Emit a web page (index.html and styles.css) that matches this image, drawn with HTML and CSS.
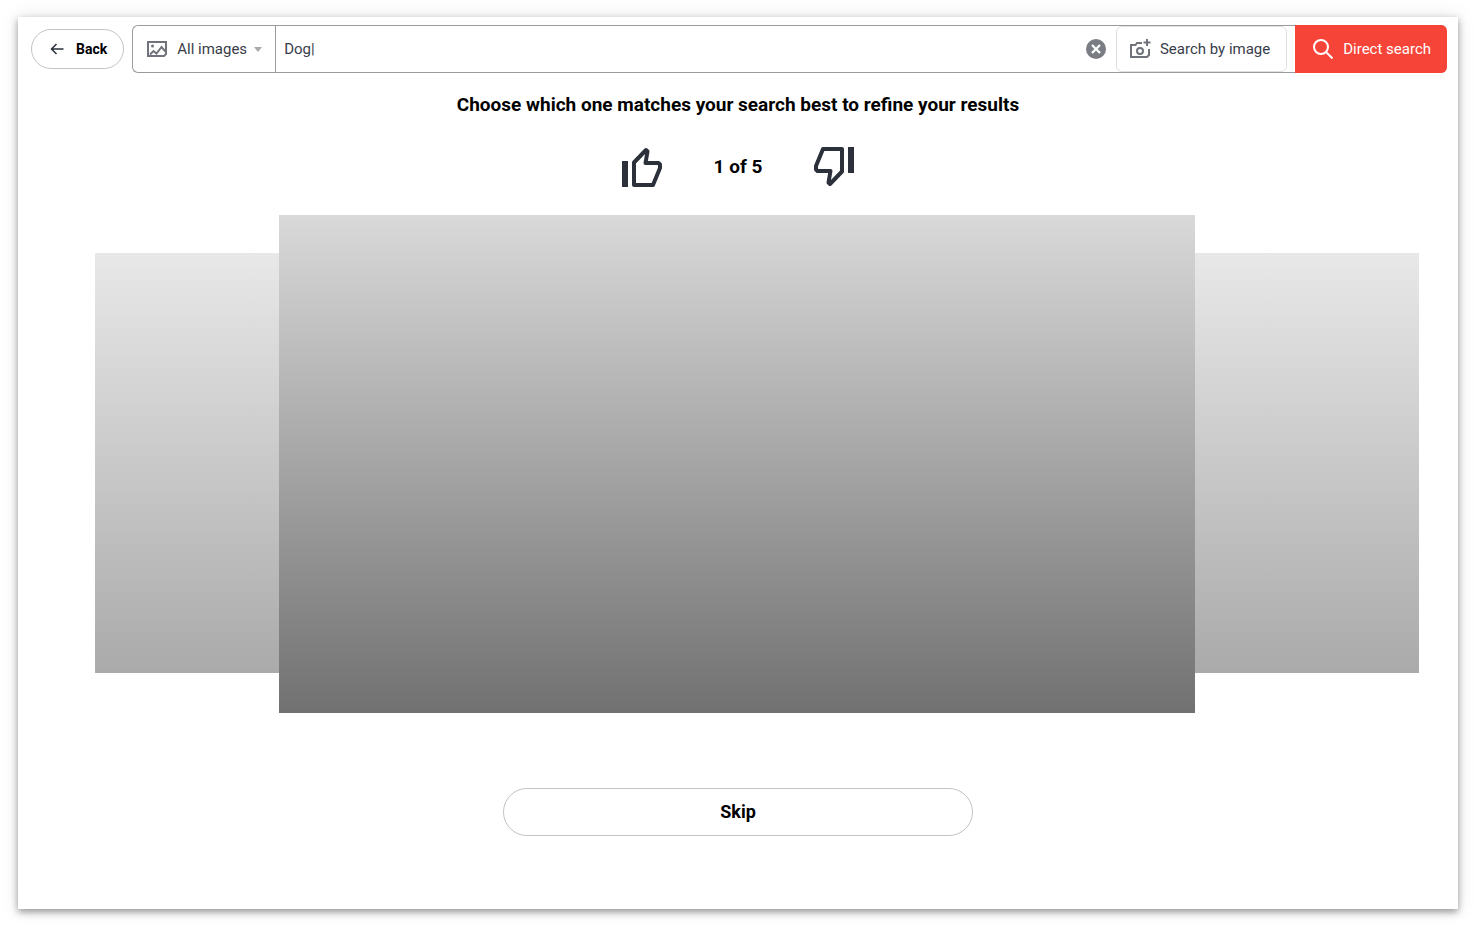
FILE: index.html
```html
<!DOCTYPE html>
<html lang="en">
<head>
<meta charset="utf-8">
<title>Refine your search</title>
<link rel="stylesheet" href="styles.css">
</head>
<body>
<div class="page">
  <header class="topbar">
    <button class="back" type="button">
      <svg class="back-icon" viewBox="0 0 14 12" aria-hidden="true"><path d="M13.500 6H1.500M6.500 1L1.500 6l5 5"/></svg>
      Back
    </button>
    <form class="search">
      <label class="category">
        <svg class="category-icon" viewBox="0 0 20 16" aria-hidden="true"><path d="M1 1h18v12L17 15H1z"/><path d="M3 13.500L6.500 10l3 2.500L14.500 6 19 11"/><circle cx="5.500" cy="5" r="1.500"/></svg>
        <select class="category-select" aria-label="Category"><option>All images</option></select>
        <svg class="caret" viewBox="0 0 8 5" aria-hidden="true"><path d="M0 0h8L4 5z"/></svg>
      </label>
      <input class="query" type="text" aria-label="Search" value="Dog|">
      <button class="clear" type="button" aria-label="Clear"><svg class="clear-icon" viewBox="0 0 20 20" aria-hidden="true"><circle cx="10" cy="10" r="10"/><path d="M6 6l8 8M14 6l-8 8"/></svg></button>
      <button class="by-image" type="button">
        <svg class="camera-icon" viewBox="0 0 21 20" aria-hidden="true"><path d="M12 4H7L5.500 6H1v12h16l2-2v-6"/><circle cx="10" cy="12" r="3"/><path d="M17 0v7M13.500 3.500h7"/></svg>
        Search by image
      </button>
      <button class="direct" type="submit">
        <svg class="magnifier" viewBox="0 0 20 20" aria-hidden="true"><circle cx="8" cy="8" r="7"/><path d="M13 13l6.500 6.500"/></svg>
        Direct search
      </button>
    </form>
  </header>
  <main class="refine">
    <h1 class="title">Choose which one matches your search best to refine your results</h1>
    <div class="vote">
      <button class="thumb" type="button" aria-label="Matches"><svg class="thumb-icon" viewBox="0 0 40 40" aria-hidden="true"><path class="bar" d="M0 14h6v26H0z"/><path class="hand" d="M12 15.500L24 3 25.500 4.500 23.500 16H36.500L38 17.500V21L31 38H12z"/></svg></button>
      <span class="count">1 of 5</span>
      <button class="thumb" type="button" aria-label="Does not match"><svg class="thumb-icon thumb-down" viewBox="0 0 40 40" aria-hidden="true"><path class="bar" d="M0 14h6v26H0z"/><path class="hand" d="M12 15.500L24 3 25.500 4.500 23.500 16H36.500L38 17.500V21L31 38H12z"/></svg></button>
    </div>
    <div class="carousel">
      <div class="slide"></div>
      <div class="slide slide-current"></div>
      <div class="slide"></div>
    </div>
    <button class="skip" type="button">Skip</button>
  </main>
</div>
</body>
</html>
```
FILE: styles.css
```css
* { box-sizing: border-box; }
body {
  margin: 0;
  padding: 17px 18px 19px;
  min-height: 100vh;
  display: flex;
  background: #fff;
  color: #000;
  font-family: Roboto, "Liberation Sans", sans-serif;
}
button, input, select { font: inherit; color: inherit; margin: 0; }
button { cursor: pointer; }
svg { display: block; flex: none; fill: none; }
.page {
  flex: 1;
  display: flex;
  flex-direction: column;
  background: #fff;
  box-shadow: 0 3px 7px rgba(0, 0, 0, .38), 0 0 18px rgba(0, 0, 0, .1);
}
.topbar {
  display: flex;
  align-items: center;
  gap: 8px;
  padding: 8px 11px 0 13px;
}
.back {
  display: flex;
  align-items: center;
  gap: 12px;
  height: 40px;
  padding: 0 16px 0 18px;
  border: 1px solid #c4c4c4;
  border-radius: 20px;
  background: #fff;
  font-size: 14px;
  font-weight: 700;
}
.back-icon { width: 14px; height: 12px; stroke: #2b303b; stroke-width: 1.5; }
.search {
  flex: 1;
  display: flex;
  align-items: center;
  height: 48px;
  border: 1px solid #999b9f;
  border-right: 0;
  border-radius: 6px;
  color: #383d49;
  font-size: 15px;
}
.category {
  display: flex;
  align-items: center;
  align-self: stretch;
  width: 143px;
  padding: 0 13px 0 14px;
  border-right: 1px solid #999b9f;
}
.category-icon { width: 20px; height: 16px; stroke: #6f737b; stroke-width: 2; }
.category-icon circle { fill: #6f737b; stroke: none; }
.category-select {
  flex: 1;
  min-width: 0;
  padding: 0 0 0 10px;
  border: 0;
  background: none;
  appearance: none;
}
.caret { width: 8px; height: 5px; fill: #a7a9ad; }
.query {
  flex: 1;
  min-width: 0;
  padding: 0 8px;
  border: 0;
  outline: 0;
  background: none;
}
.clear { margin-right: 10px; padding: 0; border: 0; background: none; }
.clear-icon { width: 20px; height: 20px; fill: #7a7d83; }
.clear-icon path { stroke: #fff; stroke-width: 2.4; }
.by-image {
  display: flex;
  align-items: center;
  gap: 9px;
  height: 46px;
  padding: 0 16px 0 13px;
  margin-right: 8px;
  border: 1px solid #dedfe1;
  border-radius: 6px;
  background: #fff;
}
.camera-icon { width: 21px; height: 20px; stroke: #6f737b; stroke-width: 2; }
.direct {
  display: flex;
  align-items: center;
  gap: 10px;
  height: 48px;
  padding: 0 16px 0 18px;
  border: 0;
  border-radius: 0 6px 6px 0;
  background: #f64438;
  color: #fff;
}
.magnifier { width: 20px; height: 20px; stroke: #fff; stroke-width: 2; }
.refine {
  display: flex;
  flex-direction: column;
  align-items: center;
}
.title {
  margin: 20px 0 0;
  font-size: 19px;
  line-height: 24px;
  font-weight: 700;
}
.vote {
  display: flex;
  align-items: center;
  gap: 52px;
  margin-top: 30px;
}
.thumb { padding: 0; border: 0; background: none; }
.thumb-icon { width: 40px; height: 40px; }
.thumb-down { transform: rotate(180deg); }
.bar { fill: #2b303b; }
.hand { stroke: #2b303b; stroke-width: 4; stroke-linejoin: round; }
.count { padding-bottom: 2px; font-size: 19px; font-weight: 700; }
.carousel {
  align-self: stretch;
  display: grid;
  grid-template-columns: 184fr 916fr 224fr;
  margin-top: 28px;
  padding: 0 39px 0 77px;
}
.slide {
  height: 420px;
  margin-top: 38px;
  background: linear-gradient(#e8e8e8, #aaa);
}
.slide-current {
  height: 498px;
  margin-top: 0;
  background: linear-gradient(#d9d9d9, #717171);
}
.skip {
  width: 470px;
  max-width: 100%;
  height: 48px;
  margin-top: 75px;
  padding: 0 0 2px;
  border: 1px solid #c4c4c4;
  border-radius: 24px;
  background: #fff;
  font-size: 18px;
  font-weight: 700;
}
```
